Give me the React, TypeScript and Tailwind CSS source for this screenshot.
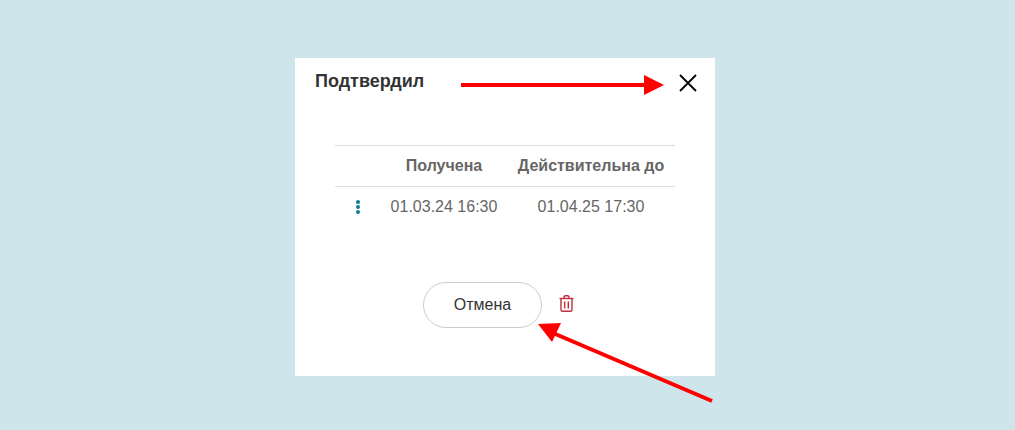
export default function App() {
  return (
    <div className="relative h-[430px] w-[1015px] overflow-hidden bg-[#cfe5ec] pt-[58px] font-['Liberation_Sans',Arial,sans-serif]">
      {/* Dialog */}
      <div className="ml-[295px] h-[318px] w-[420px] bg-white">
        <div className="flex items-start justify-between pl-5 pr-[18px] pt-[13px]">
          <h2 className="text-[18px] font-bold leading-[21px] text-[#333333]">Подтвердил</h2>
          <button className="mt-[3px] text-black">
            <svg width="18" height="18" viewBox="0 0 18 18" fill="none" stroke="currentColor" strokeWidth="1.8">
              <path d="M1 1l16 16M17 1L1 17" />
            </svg>
          </button>
        </div>

        {/* Table */}
        <div className="mx-10 mt-[53px] border-t border-[#dddddd] text-[16px] text-[#666666]">
          <div className="grid h-[41px] grid-cols-[46px_126px_168px] items-center border-b border-[#dddddd] text-center font-bold">
            <span />
            <span>Получена</span>
            <span>Действительна до</span>
          </div>
          <div className="grid h-[40px] grid-cols-[46px_126px_168px] items-center text-center">
            <span className="flex flex-col items-center gap-[1px]">
              <span className="h-[4px] w-[4px] rounded-full bg-[#0f7a99]" />
              <span className="h-[4px] w-[4px] rounded-full bg-[#0f7a99]" />
              <span className="h-[4px] w-[4px] rounded-full bg-[#0f7a99]" />
            </span>
            <span>01.03.24 16:30</span>
            <span>01.04.25 17:30</span>
          </div>
        </div>

        {/* Actions */}
        <div className="ml-[128px] mt-[55px] flex items-center gap-[17px]">
          <button className="h-[46px] w-[119px] rounded-full border border-[#cccccc] bg-white text-[16px] text-[#333333]">
            Отмена
          </button>
          <svg width="15" height="17" viewBox="0 0 15 17" fill="none" stroke="#c0303c" strokeWidth="1.4" className="mt-[-4px]">
            <path d="M0.5 3.5h14" />
            <path d="M5 3.2V2a1.2 1.2 0 0 1 1.2-1.2h2.6A1.2 1.2 0 0 1 10 2v1.2" />
            <path d="M2 3.5v11.3A1.5 1.5 0 0 0 3.5 16.3h8a1.5 1.5 0 0 0 1.5-1.5V3.5" />
            <path d="M5.7 6.5v7M9.3 6.5v7" />
          </svg>
        </div>
      </div>

      {/* Red annotation arrows */}
      <svg className="pointer-events-none absolute inset-0" width="1015" height="430" viewBox="0 0 1015 430">
        <path d="M461 85H646" stroke="#ff0000" strokeWidth="4" />
        <path d="M644 75L664 85L644 95Z" fill="#ff0000" />
        <path d="M712 401L553 333" stroke="#ff0000" strokeWidth="4" />
        <path d="M538 324L561 323L552 342Z" fill="#ff0000" />
      </svg>
    </div>
  );
}
